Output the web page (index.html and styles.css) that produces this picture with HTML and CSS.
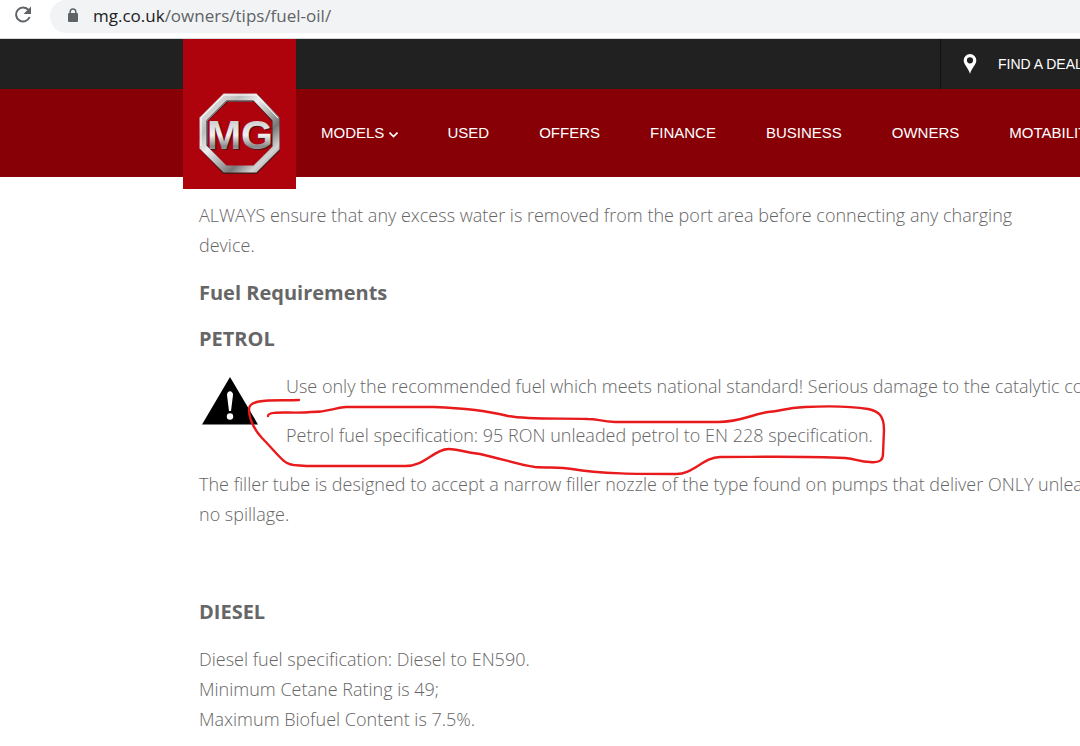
FILE: index.html
```
<!DOCTYPE html>
<html lang="en">
<head>
    <meta charset="UTF-8">
    <meta name="viewport" content="width=device-width, initial-scale=1.0">
    <title>Fuel and Oil | MG</title>
    <link rel="stylesheet" href="styles.css">
</head>
<body>
    <div class="browser-bar">
        <button class="reload" aria-label="Reload">
            <svg width="20" height="20" viewBox="0 0 20 20">
                <path d="M15.6 5.2A7 7 0 1 0 16.6 12" fill="none" stroke="#5f6368" stroke-width="2"/>
                <path d="M18 1.5V9h-7.5z" fill="#5f6368"/>
            </svg>
        </button>
        <div class="address">
            <svg width="12" height="15" viewBox="0 0 12 15">
                <rect x="1" y="5" width="10" height="9" rx="1" fill="#5f6368"/>
                <path d="M3.2 6V3.8a2.8 2.8 0 0 1 5.6 0V6" fill="none" stroke="#5f6368" stroke-width="1.5"/>
            </svg>
            <div class="url" role="textbox" aria-label="Address" contenteditable="true" spellcheck="false"><span class="host">mg.co.uk</span>/owners/tips/fuel-oil/</div>
        </div>
    </div>

    <header class="header">
        <div class="top-bar">
            <a href="#" class="find-dealer">
                <svg width="14" height="20" viewBox="0 0 14 20">
                    <path fill-rule="evenodd" d="M7 0a6.3 6.3 0 0 1 6.3 6.5C13.3 10.5 8.5 14 7 20 5.5 14 .7 10.5.7 6.500A6.3 6.3 0 0 1 7 0zm0 3.200a3.1 3.1 0 1 0 0 6.200 3.1 3.1 0 0 0 0-6.200z" fill="#fff"/>
                </svg>
                FIND A DEALER
            </a>
        </div>
        <nav class="nav">
            <a href="#">MODELS <svg width="9" height="6" viewBox="0 0 9 6"><path d="M.5.5l4 4 4-4" fill="none" stroke="#fff" stroke-width="1.6"/></svg></a>
            <a href="#">USED</a>
            <a href="#">OFFERS</a>
            <a href="#">FINANCE</a>
            <a href="#">BUSINESS</a>
            <a href="#">OWNERS</a>
            <a href="#">MOTABILITY</a>
        </nav>
        <a href="#" class="logo" aria-label="MG home">
            <svg width="82" height="82" viewBox="0 0 82 82">
                <defs>
                    <linearGradient id="chrome" x1="0" y1="0" x2="1" y2="1">
                        <stop offset="0" stop-color="#f4f4f4"/>
                        <stop offset="0.25" stop-color="#bdbdbd"/>
                        <stop offset="0.4" stop-color="#eeeeee"/>
                        <stop offset="0.55" stop-color="#b8b8b8"/>
                        <stop offset="0.7" stop-color="#777777"/>
                        <stop offset="0.85" stop-color="#d5d5d5"/>
                        <stop offset="1" stop-color="#777777"/>
                    </linearGradient>
                    <linearGradient id="letters" x1="0" y1="0" x2="0" y2="1">
                        <stop offset="0" stop-color="#b9b9b9"/>
                        <stop offset="0.5" stop-color="#f2f2f2"/>
                        <stop offset="0.75" stop-color="#888888"/>
                        <stop offset="1" stop-color="#dddddd"/>
                    </linearGradient>
                </defs>
                <path d="M27 5H57L77 27V56L56 77H26L5 55V26z" fill="none" stroke="#4d1517" stroke-width="8"/>
                <path d="M26 4H56L77 26V55L56 76H26L4 54V26z" fill="none" stroke="url(#chrome)" stroke-width="7"/>
                <path d="M2 53V25L25 2H57L79 25" fill="none" stroke="#fff" stroke-width="1"/>
                <path d="M8 52V28L28 8H54" fill="none" stroke="#777" stroke-width="1"/>
                <text x="42" y="57" text-anchor="middle" class="logo-shadow">MG</text>
                <text x="41" y="56" text-anchor="middle" class="logo-text">MG</text>
            </svg>
        </a>
    </header>

    <main class="content">
        <p class="intro">ALWAYS ensure that any excess water is removed from the port area before connecting any charging device.</p>
        <h3>Fuel Requirements</h3>
        <h3>PETROL</h3>
        <div class="notice">
            <svg class="warning" width="56" height="48" viewBox="0 0 56 48">
                <path d="M28 0l28 47.5H0z" fill="#000"/>
                <path d="M25 18c0-5 6-5 6 0l-2 16h-2z" fill="#fff"/>
                <circle cx="28" cy="39.5" r="3.2" fill="#fff"/>
            </svg>
            <div>
                <p>Use only the recommended fuel which meets national standard! Serious damage to the catalytic converter</p>
                <p>Petrol fuel specification: 95 RON unleaded petrol to EN 228 specification.</p>
            </div>
            <!-- hand-drawn ring around the petrol specification -->
            <svg class="marker" width="700" height="110" viewBox="199 371 700 110">
                <path d="M299 400C275 401 249 398 249 409C249 418 253 428 262 438C270 446 279 457 284 461C289 466 297 465 306 466H404C424 467 434 449 449 449C457 449 463 452 480 454C503 459 519 465 535 467C550 468 560 467 572 469C600 474 640 474 675 474C693 475 703 457 720 457C760 457 805 456 845 458C857 459 859 462 870 462C880 463 883 460 883 454L884 430C884 416 879 411 868 409C850 406 825 406 805 407C785 408 777 412 768 412C750 415 740 422 718 422H615C600 421 597 419 588 419C560 418 530 420 508 416C484 410 460 408 434 407H346C332 408 330 412 311 412C293 414 268 410 268 416"/>
            </svg>
        </div>
        <p>The filler tube is designed to accept a narrow filler nozzle of the type found on pumps that deliver ONLY unleaded fuel,<br>no spillage.</p>
        <section class="diesel">
            <h3>DIESEL</h3>
            <p>Diesel fuel specification: Diesel to EN590.<br>Minimum Cetane Rating is 49;<br>Maximum Biofuel Content is 7.5%.</p>
        </section>
    </main>
</body>
</html>
```
FILE: styles.css
```
* {
    box-sizing: border-box;
}
body {
    margin: 0;
    background: #fff;
    color: #666;
    font-family: 'Open Sans', sans-serif;
    font-size: 18px;
    font-weight: 300;
    line-height: 30px;
    overflow: hidden;
}
a {
    color: #fff;
    text-decoration: none;
}
.browser-bar {
    display: flex;
    align-items: flex-start;
    height: 39px;
    border-bottom: 1px solid #d5d8dc;
}
.reload {
    display: flex;
    width: 50px;
    padding: 5px 0 0 13px;
    border: none;
    background: none;
}
.address {
    display: flex;
    flex: 1;
    align-items: center;
    gap: 14px;
    height: 33px;
    padding: 0 0 2px 17px;
    background: #f1f3f4;
    border-radius: 17px 0 0 17px;
}
.url {
    color: #5f6368;
    font-size: 17px;
    font-weight: 400;
}
.host {
    color: #202124;
}
.header {
    position: relative;
    font-family: 'Liberation Sans', Arial, sans-serif;
    font-weight: 400;
    white-space: nowrap;
}
.top-bar {
    display: flex;
    justify-content: flex-end;
    height: 50px;
    background: #212121;
}
.find-dealer {
    display: flex;
    align-items: center;
    gap: 21px;
    width: 140px;
    padding-left: 22px;
    border-left: 1px solid #111;
    font-size: 14px;
}
.find-dealer svg {
    flex-shrink: 0;
}
.nav {
    display: flex;
    align-items: center;
    gap: 50px;
    height: 88px;
    padding-left: 321px;
    background: #870006;
    font-size: 15px;
}
.logo {
    position: absolute;
    top: 0;
    left: 183px;
    display: flex;
    justify-content: center;
    align-items: flex-end;
    width: 113px;
    height: 150px;
    padding-bottom: 14px;
    background: #ae020d;
}
.logo-text,
.logo-shadow {
    font-size: 41px;
    font-weight: 700;
    fill: url(#letters);
}
.logo-shadow {
    fill: #4d1517;
}
.content {
    padding: 23px 0 0 199px;
    white-space: nowrap;
}
.content p {
    margin: 0 0 19px;
}
.content .intro {
    max-width: 820px;
    white-space: normal;
}
h3 {
    margin: 0 0 18px;
    font-size: 20px;
    font-weight: 700;
    line-height: 28px;
}
.notice {
    position: relative;
    display: flex;
    gap: 28px;
    padding-left: 3px;
}
.warning {
    flex-shrink: 0;
    margin-top: 6px;
}
.marker {
    position: absolute;
    top: 0;
    left: 0;
    fill: none;
    stroke: #e81a1c;
    stroke-width: 2.4;
    stroke-linecap: round;
}
.diesel {
    padding-top: 50px;
}
```
